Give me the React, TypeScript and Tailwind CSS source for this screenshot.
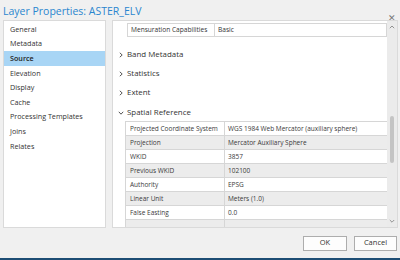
import React from 'react';

const navItems = ['General', 'Metadata', 'Source', 'Elevation', 'Display', 'Cache', 'Processing Templates', 'Joins', 'Relates'];

const spatialRows: [string, string][] = [
  ['Projected Coordinate System', 'WGS 1984 Web Mercator (auxiliary sphere)'],
  ['Projection', 'Mercator Auxiliary Sphere'],
  ['WKID', '3857'],
  ['Previous WKID', '102100'],
  ['Authority', 'EPSG'],
  ['Linear Unit', 'Meters (1.0)'],
  ['False Easting', '0.0'],
  ['', ''],
];

function Chevron({ open }: { open?: boolean }) {
  return (
    <svg width="6" height="6" viewBox="0 0 6 6" className="shrink-0">
      {open ? (
        <path d="M0.8 1.8 L3 4.2 L5.2 1.8" fill="none" stroke="#555" strokeWidth="1" />
      ) : (
        <path d="M1.8 0.8 L4.2 3 L1.8 5.2" fill="none" stroke="#555" strokeWidth="1" />
      )}
    </svg>
  );
}

export default function App() {
  return (
    <div
      className="w-[400px] h-[260px] bg-[#f0f0f0] flex flex-col overflow-hidden text-[#333]"
      style={{ fontFamily: '"Open Sans", "Noto Sans", sans-serif' }}
    >
      {/* TITLE */}
      <div className="h-[20px] flex items-start justify-between pl-[3px] pr-[4px]">
        <h1 className="text-[10.5px] leading-[22px] text-[#2a86cf]">Layer Properties: ASTER_ELV</h1>
        <span className="text-[9px] text-[#777] mt-[13px] leading-none">✕</span>
      </div>

      {/* BODY */}
      <div className="h-[208px] flex gap-[6px] pl-[3px]">
        {/* NAV */}
        <div className="w-[103px] bg-white border border-[#dadada] pt-[1px]">
          {navItems.map((n) => (
            <div
              key={n}
              className={`h-[14.6px] flex items-center pl-[6px] text-[7.2px] ${n === 'Source' ? 'bg-[#a8d5f5] font-semibold text-[#222]' : 'text-[#333]'}`}
            >
              {n}
            </div>
          ))}
        </div>

        {/* CONTENT */}
        <div className="w-[286px] bg-white border border-[#dadada] flex overflow-hidden">
          <div className="flex-1 overflow-hidden pl-[14px] pt-[2px]">
            <div className="flex h-[14px] border border-[#d6d6d6] text-[6.6px] bg-white">
              <div className="w-[87px] border-r border-[#d6d6d6] pl-[3px] flex items-center whitespace-nowrap">Mensuration Capabilities</div>
              <div className="pl-[3px] flex items-center">Basic</div>
            </div>

            <div className="mt-[8px] flex flex-col">
              {['Band Metadata', 'Statistics', 'Extent'].map((s) => (
                <div key={s} className="h-[19.3px] flex items-center gap-[3px] -ml-[9px] text-[7.9px] font-medium text-[#333]">
                  <Chevron />
                  {s}
                </div>
              ))}
              <div className="h-[19.3px] flex items-center gap-[3px] -ml-[9px] text-[7.9px] font-medium text-[#333]">
                <Chevron open />
                Spatial Reference
              </div>
            </div>

            <div className="-ml-[2px] -mt-[1px] border-l border-t border-[#d6d6d6] text-[6.5px] text-[#3a3a3a]">
              {spatialRows.map(([k, v], i) => (
                <div key={i} className={`flex h-[14px] border-b border-[#d6d6d6] ${i % 2 === 1 ? 'bg-[#ececec]' : 'bg-white'}`}>
                  <div className="w-[99px] shrink-0 border-r border-[#d6d6d6] pl-[4px] flex items-center whitespace-nowrap overflow-hidden">{k}</div>
                  <div className="flex-1 pl-[3px] flex items-center whitespace-nowrap overflow-hidden">{v}</div>
                </div>
              ))}
            </div>
          </div>

          {/* SCROLLBAR */}
          <div className="w-[10px] bg-[#ebebeb] flex flex-col items-center justify-between py-[4px]">
            <svg width="6" height="4" viewBox="0 0 6 4"><path d="M0.8 3.2 L3 1 L5.2 3.2" fill="none" stroke="#888" strokeWidth="0.9" /></svg>
            <div className="flex-1 w-full flex flex-col items-center pt-[87px]">
              <div className="w-[4px] h-[47px] rounded-full bg-[#c4c4c4]" />
            </div>
            <svg width="6" height="4" viewBox="0 0 6 4"><path d="M0.8 1 L3 3.2 L5.2 1" fill="none" stroke="#888" strokeWidth="0.9" /></svg>
          </div>
        </div>
      </div>

      {/* FOOTER */}
      <div className="flex-1 flex items-center justify-end gap-[7px] pr-[3px]">
        <button className="w-[44px] h-[15px] border border-[#adadad] bg-[#fdfdfd] text-[7.5px] text-[#333]">OK</button>
        <button className="w-[43px] h-[15px] border border-[#adadad] bg-[#fdfdfd] text-[7.5px] text-[#333]">Cancel</button>
      </div>
      <div className="h-[2px] bg-[#1d4d74]" />
    </div>
  );
}
